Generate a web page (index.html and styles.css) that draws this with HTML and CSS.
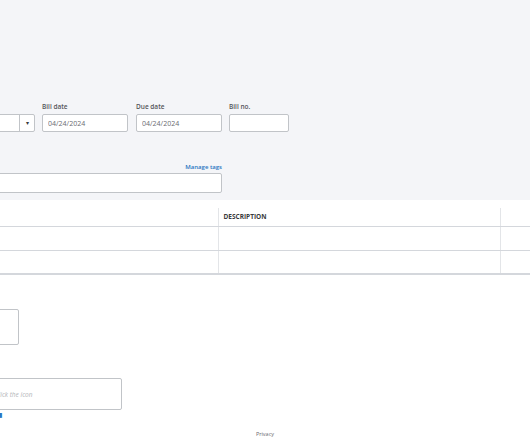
FILE: index.html
```html
<!DOCTYPE html>
<html lang="en">
<head>
    <meta charset="UTF-8">
    <meta name="viewport" content="width=device-width, initial-scale=1.0">
    <title>Bill</title>
    <link rel="stylesheet" href="styles.css">
</head>
<body>
    <!-- header area -->
    <div class="header">
        <div class="fields">
            <div class="field field-terms">
                <label>&nbsp;</label>
                <div class="select">
                    <span class="select-value"></span>
                    <span class="select-arrow">&#9662;</span>
                </div>
            </div>
            <div class="field field-date">
                <label>Bill date</label>
                <input type="text" value="04/24/2024">
            </div>
            <div class="field field-date">
                <label>Due date</label>
                <input type="text" value="04/24/2024">
            </div>
            <div class="field field-no">
                <label>Bill no.</label>
                <input type="text">
            </div>
        </div>

        <div class="tags">
            <div class="tags-head">
                <a href="#" class="link">Manage tags</a>
            </div>
            <input type="text" class="tags-input">
        </div>
    </div>

    <!-- line items -->
    <table class="lines">
        <thead>
            <tr>
                <th class="col-cat"></th>
                <th class="col-desc">DESCRIPTION</th>
                <th class="col-amt"></th>
            </tr>
        </thead>
        <tbody>
            <tr><td></td><td></td><td></td></tr>
            <tr><td></td><td></td><td></td></tr>
        </tbody>
    </table>

    <!-- memo + attachments -->
    <div class="memo">
        <div class="memo-box"></div>
    </div>

    <div class="attach">
        <div class="attach-box">Drag/Drop files here or click the icon</div>
        <a href="#" class="link attach-link">&#9646;</a>
    </div>

    <div class="footer">Privacy</div>
</body>
</html>
```

FILE: styles.css
```css
body {
    margin: 0;
    font-family: 'Open Sans', 'Liberation Sans', sans-serif;
    background: #fff;
    color: #393a3d;
    overflow: hidden;
}
.header {
    background: #f4f5f8;
    height: 200px;
    box-sizing: border-box;
    padding-top: 103px;
}
label {
    display: block;
    font-size: 6.5px;
    font-weight: 600;
    color: #55565b;
    line-height: 8px;
    height: 8px;
    margin-bottom: 3px;
}
.fields {
    display: flex;
    gap: 7px;
    margin-left: -100px;
}
.field input, .select, .tags-input {
    display: block;
    box-sizing: border-box;
    height: 18px;
    border: 1px solid #c1c4c8;
    border-radius: 2px;
    background: #fff;
    font-family: inherit;
    font-size: 7px;
    color: #6b6c72;
    padding: 0 5px;
    outline: none;
    margin: 0;
}
.field-terms { width: 135px; }
.field-date { width: 86px; }
.field-date + .field-date { margin-left: 1px; }
.field-no { width: 60px; }
.field input { width: 100%; }
.select {
    display: flex;
    padding: 0;
}
.select-value { flex: 1; }
.select-arrow {
    width: 14px;
    border-left: 1px solid #c1c4c8;
    font-size: 6px;
    display: flex;
    align-items: center;
    justify-content: center;
    color: #393a3d;
}
.tags {
    margin-left: -100px;
    width: 322px;
    margin-top: 31px;
}
.tags-head {
    display: flex;
    justify-content: flex-end;
    font-size: 6px;
    line-height: 8px;
    margin-bottom: 2px;
}
.link {
    color: #2a75c2;
    text-decoration: none;
    font-weight: 600;
}
.tags-input {
    width: 100%;
    height: 20px;
}
.lines {
    border-collapse: collapse;
    margin-left: -100px;
    margin-top: 8px;
    width: 660px;
}
.lines th {
    height: 18px;
    box-sizing: border-box;
    font-size: 6.5px;
    font-weight: 700;
    text-align: left;
    padding: 0 5px;
    color: #393a3d;
    border-bottom: 1px solid #d4d7dc;
}
.lines .col-cat { width: 318px; }
.lines .col-desc { width: 282px; }
.lines td {
    height: 24px;
    padding: 0;
    box-sizing: border-box;
    border-bottom: 1px solid #d4d7dc;
}
.lines tbody tr:last-child td { border-bottom: 2px solid #d4d7dc; }
.lines th + th, .lines td + td { border-left: 1px solid #e3e5e8; }
.memo {
    margin-left: -100px;
    margin-top: 34px;
}
.memo-box {
    width: 119px;
    height: 36px;
    box-sizing: border-box;
    border: 1px solid #c1c4c8;
    border-radius: 2px;
}
.attach {
    margin-left: -102px;
    margin-top: 33px;
}
.attach-box {
    width: 224px;
    height: 32px;
    box-sizing: border-box;
    border: 1px solid #c1c4c8;
    border-radius: 2px;
    font-size: 6.5px;
    color: #b3b5b9;
    font-style: italic;
    display: flex;
    align-items: center;
    padding-left: 29px;
    white-space: nowrap;
}
.attach-link {
    display: block;
    font-size: 6px;
    line-height: 8px;
    margin-top: 1px;
    width: 104px;
    text-align: right;
}
.footer {
    text-align: center;
    font-size: 5.5px;
    color: #6b6c72;
    margin-top: 11px;
}
```
